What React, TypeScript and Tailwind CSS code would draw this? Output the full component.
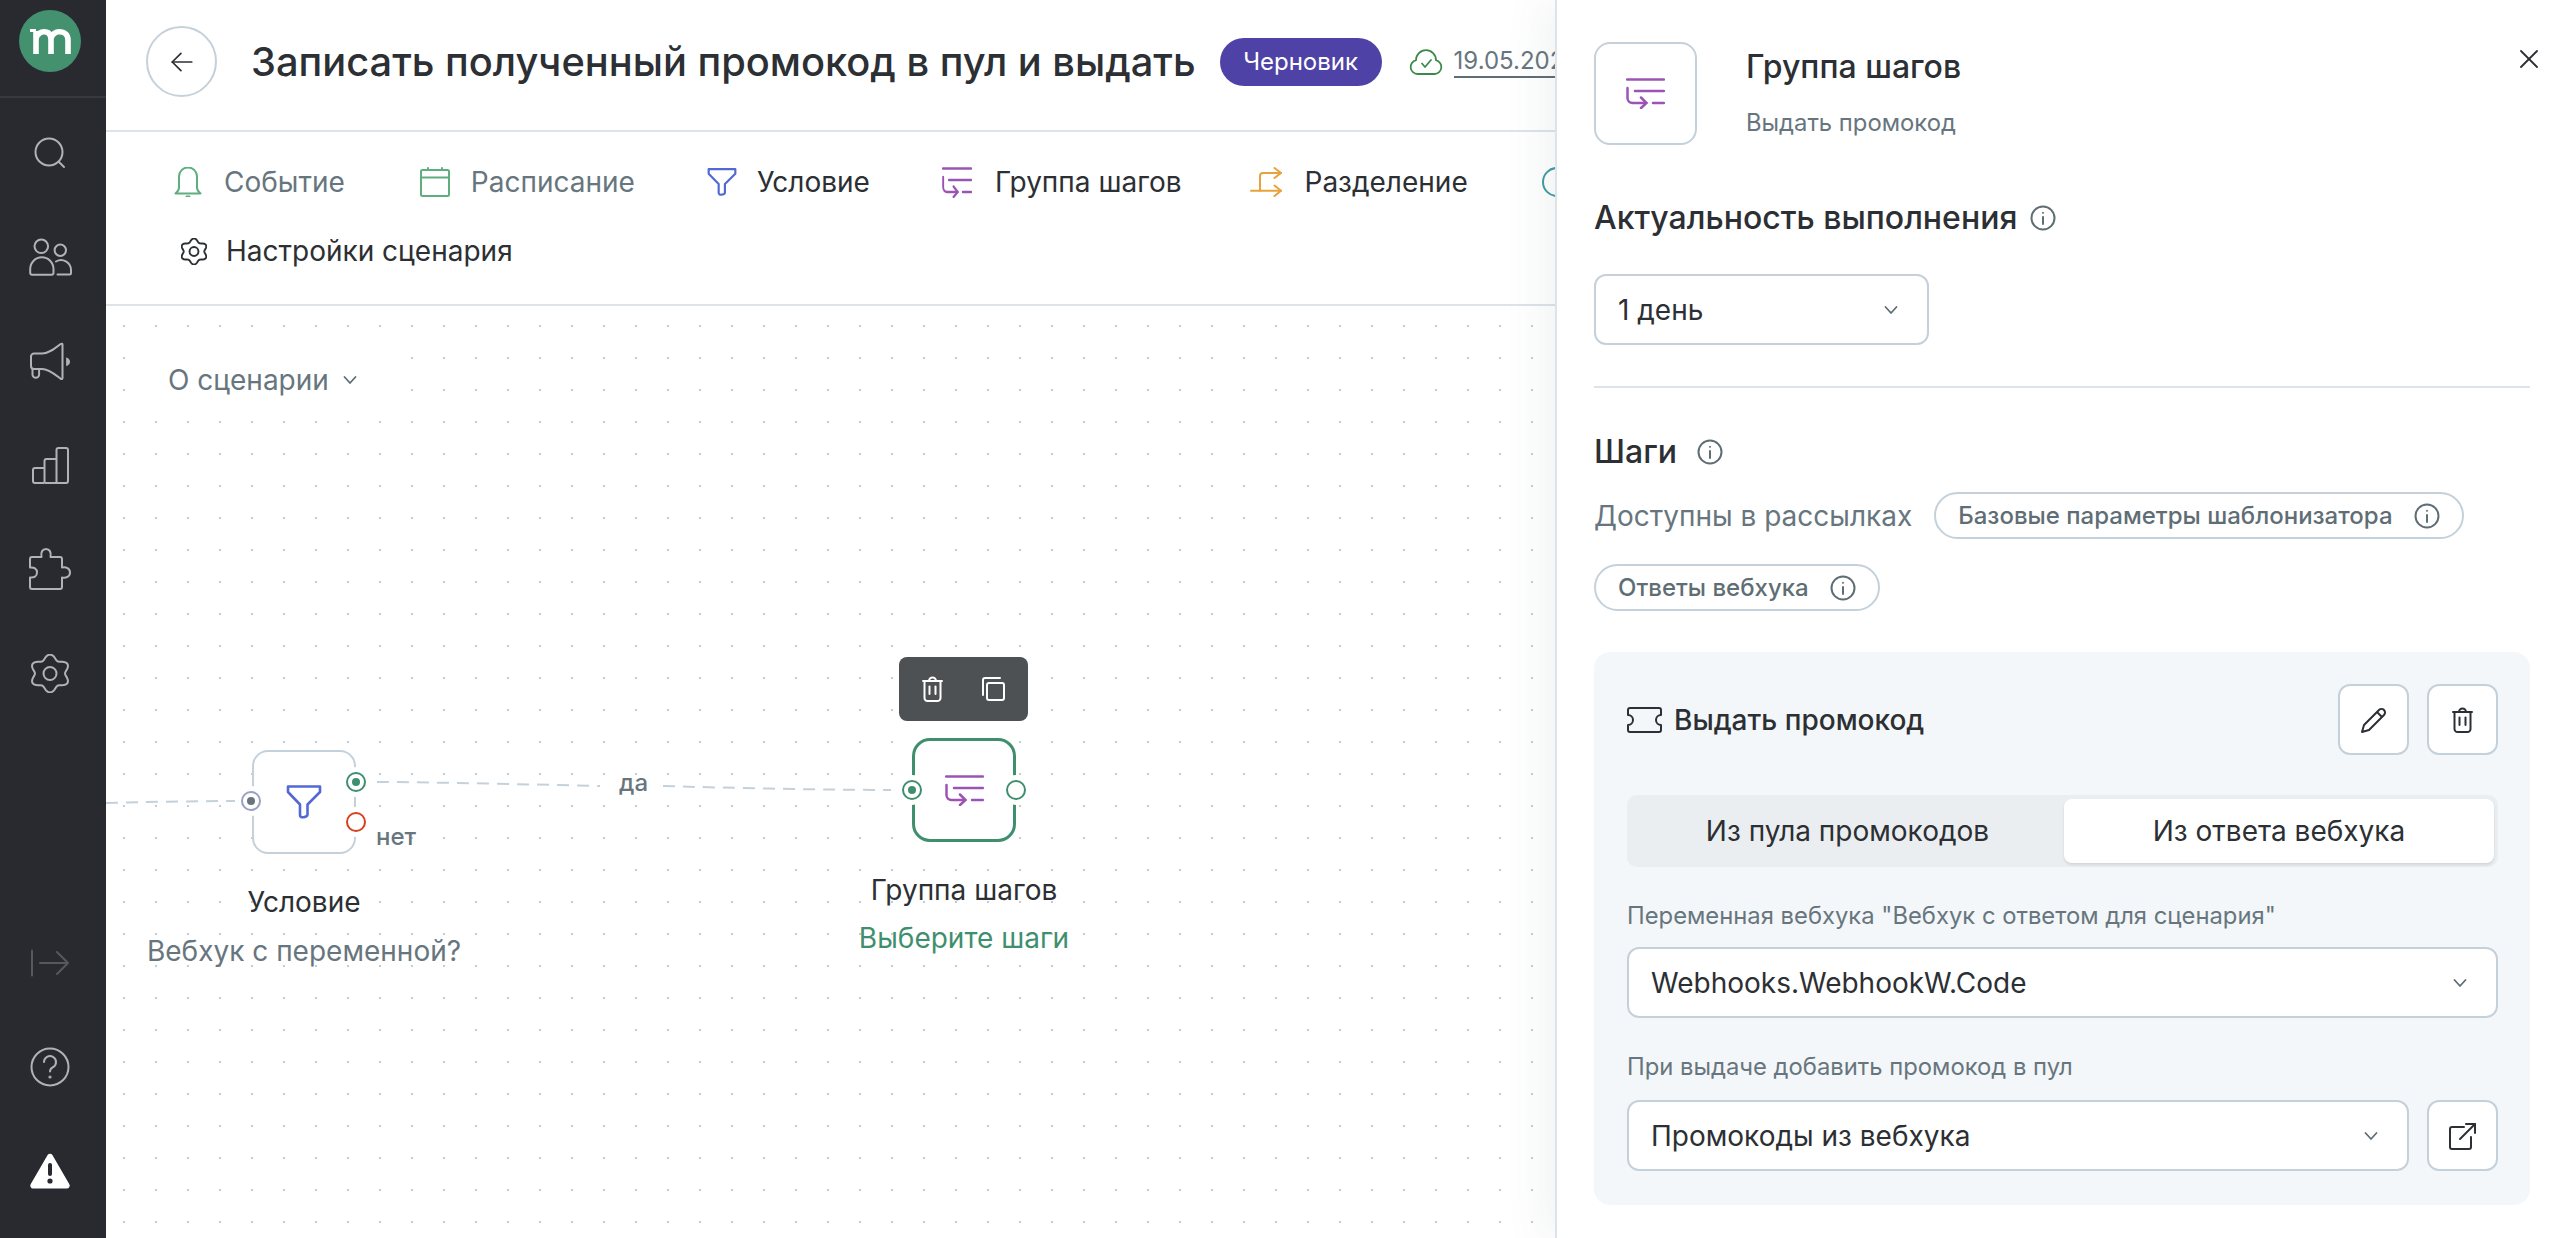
import React from 'react';

const GroupIcon = ({ className = 'w-[39px] h-[31px]' }: { className?: string }) => (
    <svg viewBox="0 0 39 31" preserveAspectRatio="none" fill="none" stroke="#9a55b4" strokeWidth="2.5" strokeLinecap="round" className={className}>
        <path d="M1 1.5H38" />
        <path d="M9 13H38" />
        <path d="M27 25H38" />
        <path d="M1.5 10V20a5 5 0 0 0 5 5H20" />
        <path d="M15 19.5l5.5 5.5-5.5 5" />
    </svg>
);

const FilterIcon = ({ className }: { className?: string }) => (
    <svg viewBox="0 0 36 36" fill="none" stroke="#5468d4" strokeWidth="2.6" strokeLinejoin="round" className={className}>
        <path d="M2 2.5H34V8L21.5 20.5V30.5C21.5 33 14 35 14 31V20.5L2 8Z" />
    </svg>
);

const InfoIcon = () => (
    <svg viewBox="0 0 26 26" fill="none" stroke="#5f6e75" strokeWidth="2" className="h-[26px] w-[26px] shrink-0">
        <circle cx="13" cy="13" r="11.5" />
        <path d="M13 12v7" strokeLinecap="round" />
        <circle cx="13" cy="7.8" r="0.6" fill="#5f6e75" strokeWidth="1" />
    </svg>
);

const Chevron = () => (
    <svg viewBox="0 0 14 10" fill="none" stroke="#5f6e75" strokeWidth="1.8" strokeLinecap="round" strokeLinejoin="round" className="h-[10px] w-[14px] shrink-0">
        <path d="M1.5 2l5.5 6 5.5-6" />
    </svg>
);

const TrashIcon = ({ color = '#2c2f33' }: { color?: string }) => (
    <svg viewBox="0 0 21 26" fill="none" stroke={color} strokeWidth="2" strokeLinecap="round" strokeLinejoin="round" className="h-[26px] w-[21px]">
        <path d="M1 5H20" />
        <path d="M7 5a3.5 3.5 0 0 1 7 0" />
        <path d="M2.5 5V22a3 3 0 0 0 3 3h10a3 3 0 0 0 3-3V5" />
        <path d="M7.5 10.5V18" />
        <path d="M13.5 10.5V18" />
    </svg>
);

// шестилепестковая шестерёнка
const gearOutline = () => {
    const points: string[] = [];
    for (let i = 0; i < 120; i++) {
        const t = (i / 120) * Math.PI * 2;
        const r = 16.6 - 2.4 * Math.cos(6 * t);
        points.push(`${(19 + 1.06 * r * Math.cos(t)).toFixed(2)} ${(19.5 - r * Math.sin(t)).toFixed(2)}`);
    }
    return `M${points.join('L')}Z`;
};

const GearIcon = ({ color, className, width = 2 }: { color: string; className: string; width?: number }) => (
    <svg viewBox="0 0 38 39" fill="none" stroke={color} strokeWidth={width} strokeLinejoin="round" className={className}>
        <path d={gearOutline()} />
        <circle cx="19" cy="19.5" r="6.5" />
    </svg>
);

const NavIcon = ({ children }: { children: React.ReactNode }) => (
    <div className="flex h-[104px] items-center justify-center pr-[6px]">{children}</div>
);

const Sidebar = () => (
    <nav className="flex w-[106px] shrink-0 flex-col bg-[#282a30]">
        <div className="flex h-[98px] shrink-0 items-start justify-center border-b-2 border-[#38393f] pt-[10px] pr-[6px]">
            <div className="flex h-[62px] w-[62px] items-center justify-center rounded-full bg-[#43916f]">
                <svg viewBox="0 0 41 25" fill="none" stroke="#fff" strokeWidth="5.6" className="h-[25px] w-[41px]">
                    <path d="M0 1.5H6" strokeWidth="3" />
                    <path d="M6 25V2" />
                    <path d="M6 9C8 4.5 11 2.8 14 2.8C19 2.8 21 6 21 11V25" />
                    <path d="M21 9C23 4.5 26 2.8 29 2.8C35 2.8 38 6 38 11V25" />
                </svg>
            </div>
        </div>
        <div className="flex flex-col pt-[3px]">
            <NavIcon>
                <svg viewBox="0 0 32 32" fill="none" stroke="#b0b3b5" strokeWidth="2" strokeLinecap="round" className="h-[32px] w-[32px]">
                    <circle cx="15" cy="15" r="13.5" />
                    <path d="M25 25l5 5" />
                </svg>
            </NavIcon>
            <NavIcon>
                <svg viewBox="0 0 43 38" fill="none" stroke="#b0b3b5" strokeWidth="2" strokeLinecap="round" strokeLinejoin="round" className="h-[38px] w-[43px]">
                    <circle cx="12.3" cy="8.3" r="6.8" />
                    <circle cx="31.3" cy="12.3" r="5.7" />
                    <path d="M3 36.7H22.5a2 2 0 0 0 2-2V31a11.6 11.6 0 0 0-23.3 0v3.7a2 2 0 0 0 1.8 2Z" />
                    <path d="M27 23.5a10 10 0 0 1 15 8.5v3a1.5 1.5 0 0 1-1.5 1.5H28.5" />
                </svg>
            </NavIcon>
            <NavIcon>
                <svg viewBox="0 0 42 38" fill="none" stroke="#b0b3b5" strokeWidth="2" strokeLinecap="round" strokeLinejoin="round" className="h-[38px] w-[42px]">
                    <path d="M33.5 2.5V36c0 1-1 1.3-1.8.8C26 32.5 20 27 13 27H5a3 3 0 0 1-3-3V14.5a3 3 0 0 1 3-3h8c7 0 13-5 18.7-9.5.8-.5 1.8-.2 1.8.5Z" />
                    <path d="M3.5 27v5.5a3.3 3.3 0 0 0 6.6 0V27" />
                    <path d="M38 16a4 4 0 0 1 0 7.5Z" fill="#b0b3b5" strokeWidth="1" />
                </svg>
            </NavIcon>
            <NavIcon>
                <svg viewBox="0 0 37 37" fill="none" stroke="#b0b3b5" strokeWidth="2" strokeLinejoin="round" className="h-[37px] w-[37px]">
                    <path d="M12.5 36H3a2 2 0 0 1-2-2V23a2 2 0 0 1 2-2h9.5" />
                    <path d="M12.5 36V14a2 2 0 0 1 2-2H24.5" />
                    <path d="M24.5 36V3a2 2 0 0 1 2-2h7.5a2 2 0 0 1 2 2V34a2 2 0 0 1-2 2Z" />
                    <path d="M12.5 36H24.5" />
                </svg>
            </NavIcon>
            <NavIcon>
                <svg viewBox="0 0 42 42" fill="none" stroke="#b0b3b5" strokeWidth="2" strokeLinejoin="round" className="h-[42px] w-[42px]">
                    <path d="M3 9H12.5C11.5 4 13.5 1 17 1S22.5 4 21.5 9H31a2 2 0 0 1 2 2V19.5C37 18.5 41 20.5 41 24.5S37 30.5 33 29.5V39a2 2 0 0 1-2 2H3a2 2 0 0 1-2-2V29.5C5 30 8 28.5 8 24.5S5 19 1 19.5V11a2 2 0 0 1 2-2Z" />
                </svg>
            </NavIcon>
            <NavIcon>
                <GearIcon color="#b0b3b5" className="h-[39px] w-[38px]" />
            </NavIcon>
        </div>
        <div className="mt-auto flex flex-col pb-[15px]">
            <NavIcon>
                <svg viewBox="0 0 40 28" fill="none" stroke="#55585c" strokeWidth="2" strokeLinecap="round" strokeLinejoin="round" className="h-[28px] w-[40px]">
                    <path d="M2 1.5V26.5" />
                    <path d="M10 14H37" />
                    <path d="M27 3l11 11-11 11" />
                </svg>
            </NavIcon>
            <NavIcon>
                <svg viewBox="0 0 40 40" fill="none" stroke="#b0b3b5" strokeWidth="2" strokeLinecap="round" className="h-[40px] w-[40px]">
                    <circle cx="20" cy="20" r="18.5" />
                    <path d="M14 15a6 6 0 1 1 9 5.2c-2 1.2-3 2.3-3 4.3" />
                    <circle cx="20" cy="30" r="0.6" fill="#b0b3b5" />
                </svg>
            </NavIcon>
            <NavIcon>
                <svg viewBox="0 0 40 36" className="h-[36px] w-[40px]">
                    <path d="M17.6 2a2.8 2.8 0 0 1 4.8 0l16.8 29a3 3 0 0 1-2.4 4.6H3A3 3 0 0 1 .8 31Z" fill="#fff" />
                    <rect x="18" y="10" width="4" height="13" rx="2" fill="#282a30" />
                    <circle cx="20" cy="28" r="2.6" fill="#282a30" />
                </svg>
            </NavIcon>
        </div>
    </nav>
);

const TopBar = () => (
    <header className="flex h-[132px] shrink-0 items-start border-b-2 border-[#dde3e7] pt-[26px] pl-[40px]">
        <div className="flex h-[71px] items-center whitespace-nowrap">
            <button className="flex h-[71px] w-[71px] shrink-0 items-center justify-center rounded-full border-2 border-[#c5d1da]">
                <svg viewBox="0 0 24 24" fill="none" stroke="#2c2f33" strokeWidth="1.6" strokeLinecap="round" strokeLinejoin="round" className="h-[26px] w-[26px]">
                    <path d="M21 12H3" />
                    <path d="M11 4l-8 8 8 8" />
                </svg>
            </button>
            <h1 className="ml-[34px] text-[39.8px] font-medium text-[#2c2f33]">Записать полученный промокод в пул и выдать</h1>
            <span className="ml-[24px] flex h-[48px] w-[162px] items-center justify-center rounded-full bg-[#4f42a6] text-[24px] text-white">Черновик</span>
            <svg viewBox="0 0 34 26" fill="none" stroke="#3b8a4a" strokeWidth="1.8" strokeLinecap="round" strokeLinejoin="round" className="ml-[27px] h-[26px] w-[34px] shrink-0">
                <path d="M8.5 25a7 7 0 0 1-1.5-13.8A10 10 0 0 1 27 11.2 7 7 0 0 1 25.5 25Z" />
                <path d="M13 14.5l3 3.5 6-7" />
            </svg>
            <span className="ml-[11px] border-b-2 border-[#5f6e75] text-[24px] leading-[30px] text-[#67767e]">19.05.2023</span>
        </div>
    </header>
);

const ToolItem = ({ icon, label, muted, className }: { icon: React.ReactNode; label: string; muted?: boolean; className: string }) => (
    <div className={`flex h-[44px] items-center whitespace-nowrap ${className}`}>
        {icon}
        <span className={`text-[28px] ${muted ? 'text-[#67767e]' : 'text-[#2c2f33]'}`}>{label}</span>
    </div>
);

const Toolbar = () => (
    <div className="h-[174px] shrink-0 border-b-2 border-[#dde3e7] pt-[28px] pl-[68px]">
        <div className="flex gap-[74px]">
            <ToolItem
                muted
                className="gap-[22px]"
                label="Событие"
                icon={
                    <svg viewBox="0 0 28 30" fill="none" stroke="#5fae7e" strokeWidth="2" strokeLinecap="round" strokeLinejoin="round" className="h-[30px] w-[28px] shrink-0">
                        <path d="M1.5 26.5c2.5-2 3.5-3 3.5-6V9.5a9 9 0 0 1 18 0v11c0 3 1 4 3.5 6Z" />
                        <path d="M12.5 29.5h3" />
                    </svg>
                }
            />
            <ToolItem
                muted
                className="ml-[1px] gap-[21px]"
                label="Расписание"
                icon={
                    <svg viewBox="0 0 30 30" fill="none" stroke="#5fae7e" strokeWidth="2" strokeLinecap="round" strokeLinejoin="round" className="h-[30px] w-[30px] shrink-0">
                        <rect x="1" y="3" width="28" height="26" rx="1.5" />
                        <path d="M1 10.5H29" />
                        <path d="M8 1v2" />
                        <path d="M22 1v2" />
                    </svg>
                }
            />
            <ToolItem className="-ml-[2px] gap-[20px]" label="Условие" icon={<FilterIcon className="h-[30px] w-[30px] shrink-0" />} />
            <ToolItem className="-ml-[2px] gap-[23px]" label="Группа шагов" icon={<GroupIcon className="h-[31px] w-[30px] shrink-0" />} />
            <ToolItem
                className="-ml-[6px] gap-[23px]"
                label="Разделение"
                icon={
                    <svg viewBox="0 0 32 30" fill="none" stroke="#e9a23b" strokeWidth="2" strokeLinecap="round" strokeLinejoin="round" className="h-[30px] w-[32px] shrink-0">
                        <path d="M1 23.7H31" />
                        <path d="M10 23.7V9a3 3 0 0 1 3-3H31" />
                        <path d="M24.5 1l6.5 5-6.5 5" />
                        <path d="M24.5 18.5l6.5 5.2-6.5 5.3" />
                    </svg>
                }
            />
            <div className="flex h-[44px] items-center">
                <div className="h-[30px] w-[30px] shrink-0 rounded-full border-2 border-[#3f9da3]" />
            </div>
        </div>
        <div className="mt-[25px] flex h-[44px] items-center gap-[19px] pl-[7px]">
            <GearIcon color="#2c2f33" className="h-[27px] w-[26px]" width={2.8} />
            <span className="text-[28px] whitespace-nowrap text-[#2c2f33]">Настройки сценария</span>
        </div>
    </div>
);

const Port = ({ className, color, dot }: { className: string; color: string; dot?: string }) => (
    <div
        className={`absolute flex h-[20px] w-[20px] -translate-x-1/2 -translate-y-1/2 items-center justify-center rounded-full border-2 bg-white shadow-[0_0_0_5px_#fff] ${className}`}
        style={{ borderColor: color }}
    >
        {dot && <div className="h-[8px] w-[8px] rounded-full" style={{ backgroundColor: dot }} />}
    </div>
);

const Canvas = () => (
    <div className="relative flex-1 bg-[radial-gradient(#c3ccd2_1px,transparent_1.2px)] bg-[size:32px_32px] bg-[position:2px_4px]">
        <svg className="absolute inset-0 h-full w-full" fill="none" stroke="#c5d1da" strokeWidth="2" strokeDasharray="12 8">
            <path d="M0 497C40 496 90 495 129 495" />
            <path d="M271 476C320 476 450 479 494 480" />
            <path d="M557 480C620 482 730 484 785 484" />
        </svg>

        <div className="absolute top-[39px] left-[34px] flex h-[70px] w-[260px] items-center gap-[14px] bg-white pl-[28px]">
            <span className="text-[28px] text-[#67767e]">О сценарии</span>
            <Chevron />
        </div>

        {/* Условие */}
        <div className="absolute top-[444px] left-[146px] flex h-[104px] w-[104px] items-center justify-center rounded-[16px] border-2 border-[#c5d1da] bg-white">
            <FilterIcon className="h-[36px] w-[36px]" />
        </div>
        <Port className="top-[495px] left-[145px]" color="#9aa0c4" dot="#67767e" />
        <Port className="top-[476px] left-[250px]" color="#3f8f6f" dot="#3f8f6f" />
        <Port className="top-[516px] left-[250px]" color="#d9401f" />
        <span className="absolute top-[514px] left-[270px] text-[24px] leading-[34px] font-medium text-[#67767e]">нет</span>
        <span className="absolute top-[460px] left-[513px] text-[24px] leading-[34px] font-medium text-[#67767e]">да</span>
        <div className="absolute top-[572px] left-[198px] flex -translate-x-1/2 flex-col items-center whitespace-nowrap">
            <span className="text-[28px] leading-[48px] text-[#2c2f33]">Условие</span>
            <span className="text-[28px] leading-[50px] text-[#67767e]">Вебхук с переменной?</span>
        </div>

        {/* Группа шагов */}
        <div className="absolute top-[351px] left-[793px] flex h-[64px] w-[129px] items-center justify-center gap-[38px] rounded-[8px] bg-[#4d5154]">
            <TrashIcon color="#fff" />
            <svg viewBox="0 0 24 24" fill="none" stroke="#fff" strokeWidth="2" strokeLinejoin="round" strokeLinecap="round" className="h-[24px] w-[24px]">
                <rect x="6" y="6" width="17" height="17" rx="2" />
                <path d="M2 18V3a2 2 0 0 1 2-2h15" />
            </svg>
        </div>
        <div className="absolute top-[432px] left-[806px] flex h-[104px] w-[104px] items-center justify-center rounded-[18px] border-[3px] border-[#3f8f6f] bg-white">
            <GroupIcon />
        </div>
        <Port className="top-[484px] left-[806px]" color="#3f8f6f" dot="#3f8f6f" />
        <Port className="top-[484px] left-[910px]" color="#3f8f6f" />
        <div className="absolute top-[561px] left-[858px] flex -translate-x-1/2 flex-col items-center whitespace-nowrap">
            <span className="text-[28px] leading-[47px] text-[#2c2f33]">Группа шагов</span>
            <span className="text-[28px] leading-[49px] text-[#3f8f6f]">Выберите шаги</span>
        </div>
    </div>
);

const SelectBox = ({ label, className }: { label: string; className: string }) => (
    <div className={`flex h-[71px] items-center justify-between rounded-[12px] border-2 border-[#c5d1da] bg-white pr-[29px] pl-[22px] ${className}`}>
        <span className="text-[28px] text-[#2c2f33]">{label}</span>
        <Chevron />
    </div>
);

const IconButton = ({ children }: { children: React.ReactNode }) => (
    <button className="flex h-[71px] w-[71px] shrink-0 items-center justify-center rounded-[12px] border-2 border-[#c5d1da] bg-white">
        {children}
    </button>
);

const Chip = ({ label }: { label: string }) => (
    <span className="flex h-[47px] items-center gap-[21px] rounded-full border-2 border-[#c5d1da] px-[22px] text-[24px] font-medium whitespace-nowrap text-[#5f6e75]">
        {label}
        <InfoIcon />
    </span>
);

const Panel = () => (
    <aside className="relative z-10 flex w-[1015px] shrink-0 flex-col border-l-2 border-[#dde3e7] bg-white pt-[42px] pr-[40px] pl-[37px] shadow-[-10px_0_40px_rgba(80,95,105,0.08)]">
        <div className="flex">
            <div className="flex h-[103px] w-[103px] items-center justify-center rounded-[16px] border-2 border-[#c5d1da]">
                <GroupIcon />
            </div>
            <div className="ml-[49px] flex flex-col">
                <span className="text-[32px] leading-[50px] font-medium text-[#2c2f33]">Группа шагов</span>
                <span className="mt-[14px] text-[23.8px] leading-[34px] text-[#67767e]">Выдать промокод</span>
            </div>
            <button className="mt-[8px] -mr-[9px] ml-auto self-start">
                <svg viewBox="0 0 20 18" fill="none" stroke="#2c2f33" strokeWidth="1.8" strokeLinecap="round" className="h-[18px] w-[20px]">
                    <path d="M2 1l16 16" />
                    <path d="M18 1L2 17" />
                </svg>
            </button>
        </div>

        <div className="mt-[51px] flex h-[44px] items-center gap-[13px]">
            <h2 className="text-[32px] font-medium text-[#2c2f33]">Актуальность выполнения</h2>
            <InfoIcon />
        </div>
        <SelectBox label="1 день" className="mt-[34px] w-[335px]" />
        <div className="mt-[41px] h-[2px] bg-[#dde3e7]" />

        <div className="mt-[42px] flex h-[44px] items-center gap-[20px]">
            <h2 className="text-[32px] font-medium text-[#2c2f33]">Шаги</h2>
            <InfoIcon />
        </div>
        <div className="mt-[18px] flex flex-wrap items-center gap-x-[22px] gap-y-[25px]">
            <span className="text-[28px] text-[#67767e]">Доступны в рассылках</span>
            <Chip label="Базовые параметры шаблонизатора" />
            <Chip label="Ответы вебхука" />
        </div>

        <div className="mt-[41px] rounded-[16px] bg-[#f4f7f9] pt-[32px] pr-[32px] pb-[34px] pl-[33px]">
            <div className="flex items-center">
                <div className="flex items-center gap-[12px]">
                    <svg viewBox="0 0 35 26" fill="none" stroke="#2c2f33" strokeWidth="2" strokeLinejoin="round" className="h-[26px] w-[35px] shrink-0">
                        <path d="M3 1H32a2 2 0 0 1 2 2V8a5 5 0 0 0 0 10v5a2 2 0 0 1-2 2H3a2 2 0 0 1-2-2V18a5 5 0 0 0 0-10V3a2 2 0 0 1 2-2Z" />
                    </svg>
                    <span className="text-[28px] font-medium text-[#2c2f33]">Выдать промокод</span>
                </div>
                <div className="ml-auto flex gap-[18px]">
                    <IconButton>
                        <svg viewBox="0 0 28 28" fill="none" stroke="#2c2f33" strokeWidth="2" strokeLinejoin="round" className="h-[28px] w-[28px]">
                            <path d="M2 26l2-7L19 4a3.5 3.5 0 0 1 5 5L9 24Z" />
                            <path d="M17 6l5 5" />
                        </svg>
                    </IconButton>
                    <IconButton>
                        <TrashIcon />
                    </IconButton>
                </div>
            </div>
            <div className="mt-[40px] flex h-[72px] items-stretch rounded-[10px] bg-[#ebeef0] p-[4px]">
                <div className="flex flex-1 items-center justify-center text-[28px] text-[#2c2f33]">Из пула промокодов</div>
                <div className="flex w-[430px] items-center justify-center rounded-[8px] bg-white text-[28px] text-[#2c2f33] shadow-[0_2px_3px_rgba(0,0,0,0.1)]">
                    Из ответа вебхука
                </div>
            </div>
            <div className="mt-[33px] text-[23.8px] leading-[32px] text-[#67767e]">Переменная вебхука "Вебхук с ответом для сценария"</div>
            <SelectBox label="Webhooks.WebhookW.Code" className="mt-[15px]" />
            <div className="mt-[33px] text-[23.8px] leading-[32px] text-[#67767e]">При выдаче добавить промокод в пул</div>
            <div className="mt-[17px] flex gap-[18px]">
                <SelectBox label="Промокоды из вебхука" className="flex-1" />
                <IconButton>
                    <svg viewBox="0 0 28 28" fill="none" stroke="#2c2f33" strokeWidth="2" strokeLinecap="round" strokeLinejoin="round" className="h-[28px] w-[28px]">
                        <path d="M15 5H3a2 2 0 0 0-2 2v18a2 2 0 0 0 2 2h17a2 2 0 0 0 2-2V15" />
                        <path d="M11 17L26 2" />
                        <path d="M17 2h9v9" />
                    </svg>
                </IconButton>
            </div>
        </div>
    </aside>
);

const App = () => {
    return (
        <div className="flex h-[1238px] w-[2570px] overflow-hidden bg-white font-['Inter',sans-serif]">
            <Sidebar />
            <main className="flex min-w-0 flex-1 flex-col overflow-hidden">
                <TopBar />
                <Toolbar />
                <Canvas />
            </main>
            <Panel />
        </div>
    );
};

export default App;
